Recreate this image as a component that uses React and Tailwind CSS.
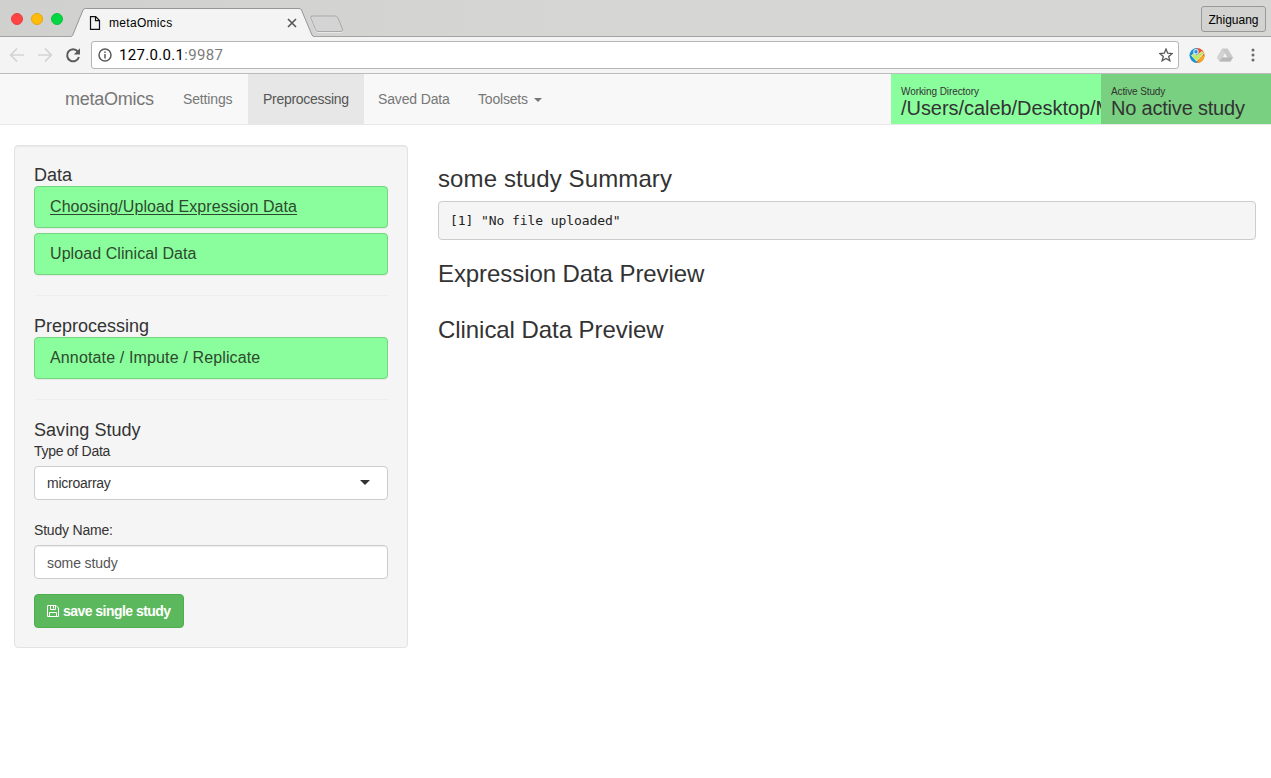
import React from "react";

function TabStrip() {
  return (
    <div className="relative flex h-[37px] items-start border-b border-[#a3a3a3] bg-linear-to-r from-[#d0d0ce] via-[#d6d6d4] to-[#d6d6d4]">
      <div className="flex w-[71px] gap-2 pt-[13px] pl-[11px]">
        <span className="size-3 rounded-full border border-[#e8403f] bg-[#ff4443]" />
        <span className="size-3 rounded-full border border-[#e5a50c] bg-[#ffbd0a]" />
        <span className="size-3 rounded-full border border-[#0fc03c] bg-[#03d742]" />
      </div>
      <div className="relative h-[37px] w-[243px]">
        <svg className="absolute inset-0" width="243" height="37" viewBox="0 0 243 37">
          <path d="M0 36.5 Q1.500 36 2 34.500 L12 10 Q12.700 8.500 14.500 8.500 H228 Q229.800 8.500 230.500 10 L240.500 34 Q241.300 36.500 243 36.500 V37 H0Z" fill="#f4f4f4" />
          <path d="M0 36.500 Q1.500 36 2 34.500 L12 10 Q12.700 8.500 14.500 8.500 H228 Q229.800 8.500 230.500 10 L240.500 34 Q241.300 36.500 243 36.500" fill="none" stroke="#969696" />
        </svg>
        <div className="relative flex h-[37px] items-center pt-[9px] pl-[18px]">
          <svg width="12" height="15" viewBox="0 0 12 15" fill="none" stroke="#111" strokeWidth="1.200">
            <path d="M1.500 0.700 H6.700 L10.500 4.500 V13.400 H1.500Z M6.500 0.700 V4.700 H10.500" />
          </svg>
          <span className="ml-2 w-[178px] text-[12px] leading-4 tracking-[0.310px] text-black">metaOmics</span>
          <svg width="10" height="10" viewBox="0 0 10 10" stroke="#555" strokeWidth="1.600">
            <path d="M1 1 L9 9 M9 1 L1 9" />
          </svg>
        </div>
      </div>
      <svg className="-ml-[6px] mt-[14px]" width="38" height="20" viewBox="0 0 38 20">
        <path d="M4 3 H27 Q29 3 30 5 L34.500 16 Q35 18.500 33 18.500 H10 Q8.500 18.500 7.500 16.500 L3 5.500 Q2 3 4 3Z" fill="none" stroke="#e8e8e8" />
        <path d="M4 2 H27 Q29 2 30 4 L34.500 15 Q35 17.500 33 17.500 H10 Q8.500 17.500 7.500 15.500 L3 4.500 Q2 2 4 2Z" fill="#d4d4d4" stroke="#a9a9a9" />
      </svg>
      <div className="mt-[6px] mr-[5px] ml-auto flex h-[26px] w-[65px] items-center justify-center rounded-[3px] border border-[#999] bg-[#d2d2d0] pt-[2px] text-[12px] text-black">
        Zhiguang
      </div>
    </div>
  );
}

function Toolbar() {
  return (
    <div className="flex h-[37px] items-center border-b border-[#bcbcbc] bg-[#f4f4f4]">
      <svg width="91" height="36" viewBox="0 0 91 36" fill="none" strokeWidth="1.700">
        <path d="M24 18 H11 M17 11.500 L10.700 18 L17 24.500" stroke="#d3d3d3" />
        <path d="M38 18 H51 M45 11.500 L51.300 18 L45 24.500" stroke="#d3d3d3" />
        <path d="M77.800 14.500 A6 6 0 1 0 78.900 20" stroke="#5a5a5a" strokeWidth="2" />
        <path d="M80 11.300 V17.500 H73.800Z" fill="#5a5a5a" />
      </svg>
      <div className="flex h-7 w-[1088px] items-center rounded-[3px] border border-[#b5b5b5] bg-white pr-[5px] pl-[6px]">
        <svg width="14" height="14" viewBox="0 0 14 14" fill="none" stroke="#5a5a5a" strokeWidth="1.500">
          <circle cx="7" cy="7" r="6" />
          <path d="M7 6 V10.500 M7 3.500 V5" />
        </svg>
        <span className="ml-[7px] font-[Roboto] text-[15px] leading-5 tracking-[0.320px] text-black">
          127.0.0.1<span className="text-[#7c7c7c]">:9987</span>
        </span>
        <svg className="ml-auto" width="14" height="14" viewBox="0 0 14 14" fill="none" stroke="#5a5a5a" strokeWidth="1.300">
          <path d="M7 1 L8.700 5.200 L13.200 5.500 L9.700 8.400 L10.900 12.800 L7 10.400 L3.100 12.800 L4.300 8.400 L0.800 5.500 L5.300 5.200Z" />
        </svg>
      </div>
      <svg className="ml-[10px]" width="17" height="17" viewBox="0 0 17 17">
        <path d="M8 1 A7.500 7.500 0 0 0 8 16Z" fill="#1c8fd0" />
        <path d="M8 1 A7.500 7.500 0 0 1 8 16Z" fill="#e8502a" />
        <path d="M15.500 9 A7.500 7.500 0 0 1 8 16 L13 8Z" fill="#f5a423" />
        <path d="M2.500 8.500 L5 6.500 L7.500 8.700 L13 4.500 L14.700 6.500 L7.700 14.200Z" fill="#bdea66" stroke="#eef8d0" strokeWidth="0.800" />
        <circle cx="7" cy="4.700" r="2.200" fill="#2a8fd8" stroke="#c9e8fb" strokeWidth="1.200" />
      </svg>
      <svg className="ml-[11px]" width="16" height="14" viewBox="0 0 16 14">
        <path d="M5.300 0.500 H10.700 L16 9.500 L13.300 13.500 H2.700 L0 9.500Z" fill="#c8c8c8" />
        <path d="M5.300 0.500 L8 5 L2.700 13.500 L0 9.500Z" fill="#d2d2d2" />
        <path d="M5.300 9.500 H16 L13.300 13.500 H2.700Z" fill="#b8b8b8" />
        <path d="M8 5.300 L10.300 9.300 H5.700Z" fill="#f4f4f4" />
      </svg>
      <svg className="ml-[18px]" width="4" height="14" viewBox="0 0 4 14" fill="#6a6a6a">
        <circle cx="2" cy="2" r="1.500" />
        <circle cx="2" cy="7" r="1.500" />
        <circle cx="2" cy="12" r="1.500" />
      </svg>
    </div>
  );
}

function Navbar() {
  return (
    <nav className="flex h-[51px] border-b border-[#e7e7e7] bg-[#f8f8f8] text-[14px] text-[#777]">
      <a className="ml-[65px] w-[103px] pt-[15px] text-[18px] leading-5 tracking-[-0.250px]">metaOmics</a>
      <a className="w-20 pt-[15px] pl-[15px] leading-5 tracking-[-0.150px]">Settings</a>
      <a className="w-[116px] bg-[#e7e7e7] pt-[15px] pl-[15px] leading-5 tracking-[-0.280px] text-[#555]">Preprocessing</a>
      <a className="w-[99px] pt-[15px] pl-[14px] leading-5 tracking-[-0.150px]">Saved Data</a>
      <a className="flex items-start pt-[15px] pl-[15px] leading-5 tracking-[-0.200px]">
        Toolsets
        <span className="mt-[9px] ml-[6px] border-x-4 border-t-4 border-x-transparent border-t-[#777]" />
      </a>
      <div className="ml-auto h-[50px] w-[210px] overflow-hidden bg-[#8afd9d] pt-[12px] pl-[10px] whitespace-nowrap text-[#333]">
        <p className="text-[10px] leading-[11px] tracking-[-0.080px]">Working Directory</p>
        <p className="text-[20px] leading-[22px] tracking-[-0.050px]">/Users/caleb/Desktop/M</p>
      </div>
      <div className="h-[50px] w-[170px] bg-[#78d080] pt-[12px] pl-[10px] whitespace-nowrap text-[#333]">
        <p className="text-[10px] leading-[11px] tracking-[-0.120px]">Active Study</p>
        <p className="text-[20px] leading-[22px] tracking-[-0.200px]">No active study</p>
      </div>
    </nav>
  );
}

function PanelLink({ children, active }) {
  return (
    <a
      className={
        "block h-[42px] rounded-[4px] border border-[#75d480] bg-[#8afd9d] pt-[11px] pl-[15px] text-[16px] leading-[18px] tracking-[0.080px] text-[#2d4a2d] shadow-[0_1px_1px_rgba(0,0,0,0.05)] " +
        (active ? "underline decoration-1 underline-offset-2" : "")
      }
    >
      {children}
    </a>
  );
}

function Sidebar() {
  return (
    <aside className="h-[503px] w-[394px] rounded-[4px] border border-[#e3e3e3] bg-[#f5f5f5] px-[19px] pt-[19px] shadow-[inset_0_1px_1px_rgba(0,0,0,0.05)]">
      <h4 className="h-[21px] text-[18px] leading-5">Data</h4>
      <div className="flex flex-col gap-[5px]">
        <PanelLink active>Choosing/Upload Expression Data</PanelLink>
        <PanelLink>Upload Clinical Data</PanelLink>
      </div>
      <hr className="my-5 border-[#eee]" />
      <h4 className="h-[21px] text-[18px] leading-5">Preprocessing</h4>
      <PanelLink>
        <span className="tracking-[0.140px]">Annotate / Impute / Replicate</span>
      </PanelLink>
      <hr className="my-5 border-[#eee]" />
      <h4 className="h-[21px] text-[18px] leading-5 tracking-[0.050px]">Saving Study</h4>
      <label className="block h-[25px] text-[14px] leading-5 tracking-[-0.280px]">Type of Data</label>
      <div className="flex h-[34px] items-center justify-between rounded-[4px] border border-[#ccc] bg-white pr-[17px] pl-3 text-[14px] tracking-[-0.250px]">
        <span>microarray</span>
        <span className="-mt-px border-x-5 border-t-5 border-x-transparent border-t-[#333]" />
      </div>
      <label className="mt-5 block h-[25px] text-[14px] leading-5 tracking-[-0.200px]">Study Name:</label>
      <div className="flex h-[34px] items-center rounded-[4px] border border-[#ccc] bg-white pt-[2px] pl-3 text-[14px] tracking-[-0.100px] text-[#555] shadow-[inset_0_1px_1px_rgba(0,0,0,0.075)]">
        some study
      </div>
      <button className="mt-[15px] flex h-[34px] w-[150px] items-center rounded-[4px] border border-[#4cae4c] bg-[#5cb85c] pl-3 text-[14px] font-bold text-white">
        <svg width="12" height="12" viewBox="0 0 12 12" fill="none" stroke="#fff">
          <path d="M0.500 0.500 H9 L11.500 3 V11.500 H0.500Z M2.500 11.500 V7.500 H9.500 V11.500 M3.500 0.500 V4.500 H8.500 V0.500 M6.500 1 V3.500" />
        </svg>
        <span className="ml-1 tracking-[-0.540px] whitespace-nowrap">save single study</span>
      </button>
    </aside>
  );
}

export default function App() {
  return (
    <div className="h-[778px] w-[1271px] overflow-hidden bg-white font-['Liberation_Sans',Arial,sans-serif] text-[#333]">
      <TabStrip />
      <Toolbar />
      <Navbar />
      <main className="flex gap-[30px] pt-5 pl-[14px]">
        <Sidebar />
        <section className="w-[818px] pt-[21px] text-[24px] leading-[26px]">
          <h3 className="tracking-[0.110px]">some study Summary</h3>
          <pre className="mt-[9px] h-[39px] rounded-[4px] border border-[#ccc] bg-[#f5f5f5] pt-[9px] pl-[11px] font-['DejaVu_Sans_Mono',monospace] text-[13px] leading-[19px] tracking-[-0.080px] text-[#222]">
            {'[1] "No file uploaded"'}
          </pre>
          <h3 className="mt-[21px] tracking-[-0.080px]">Expression Data Preview</h3>
          <h3 className="mt-[30px] tracking-[-0.060px]">Clinical Data Preview</h3>
        </section>
      </main>
    </div>
  );
}
